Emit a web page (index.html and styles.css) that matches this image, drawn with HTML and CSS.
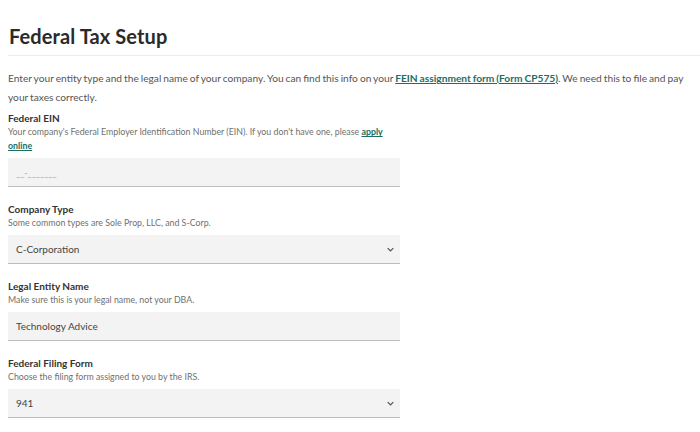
FILE: index.html
```html
<!DOCTYPE html>
<html>
<head>
<meta charset="utf-8">
<link rel="stylesheet" href="styles.css">
</head>
<body>
<div class="page">
  <header class="head">
    <h1 class="title">Federal Tax Setup</h1>
  </header>
  <p class="intro">Enter your entity type and the legal name of your company. You can find this info on your <a class="link" href="#">FEIN assignment form (Form CP575)</a>. We need this to file and pay your taxes correctly.</p>

  <div class="field first">
    <div class="label">Federal EIN</div>
    <div class="help">Your company's Federal Employer Identification Number (EIN). If you don't have one, please <a class="link" href="#">apply online</a></div>
    <div class="input placeholder">__-_______</div>
  </div>

  <div class="field">
    <div class="label">Company Type</div>
    <div class="help">Some common types are Sole Prop, LLC, and S-Corp.</div>
    <div class="input select"><span>C-Corporation</span><svg class="chev" viewBox="0 0 10 6" width="7" height="5"><path d="M1 1l4 4 4-4" fill="none" stroke="#555" stroke-width="1.8"/></svg></div>
  </div>

  <div class="field">
    <div class="label">Legal Entity Name</div>
    <div class="help">Make sure this is your legal name, not your DBA.</div>
    <div class="input">Technology Advice</div>
  </div>

  <div class="field">
    <div class="label">Federal Filing Form</div>
    <div class="help">Choose the filing form assigned to you by the IRS.</div>
    <div class="input select"><span>941</span><svg class="chev" viewBox="0 0 10 6" width="7" height="5"><path d="M1 1l4 4 4-4" fill="none" stroke="#555" stroke-width="1.8"/></svg></div>
  </div>
</div>
</body>
</html>
```

FILE: styles.css
```css
html, body {
  margin: 0;
  padding: 0;
  background: #fff;
}
body {
  font-family: Lato, "Open Sans", sans-serif;
  color: #333;
}
.page {
  padding-left: 8px;
}
.head {
  border-bottom: 1px solid #ececec;
  padding-top: 23px;
  padding-bottom: 5px;
}
.title {
  margin: 0;
  font-size: 20px;
  line-height: 27px;
  font-weight: 700;
  color: #2a2a2a;
  padding-left: 1px;
  letter-spacing: 0.1px;
}
.intro {
  margin: 13px 0 0;
  width: 690px;
  font-size: 10.2px;
  line-height: 19px;
  word-spacing: -0.6px;
  color: #555;
}
.link {
  color: #1b6f66;
  font-weight: 700;
  text-decoration: underline;
}
.field {
  width: 392px;
  margin-top: 15px;
}
.field.first {
  margin-top: 4px;
}
.label {
  font-size: 10px;
  line-height: 14px;
  font-weight: 700;
  color: #333;
}
.help {
  font-size: 8.8px;
  line-height: 14px;
  color: #707070;
}
.input {
  margin-top: 5px;
  height: 28px;
  background: #f3f3f3;
  border-bottom: 1px solid #bdbdbd;
  box-sizing: content-box;
  display: flex;
  align-items: center;
  padding: 0 6px 0 8px;
  font-size: 10px;
  color: #444;
}
.placeholder {
  color: #aaa;
  font-size: 9px;
}
.select {
  justify-content: space-between;
}
```
